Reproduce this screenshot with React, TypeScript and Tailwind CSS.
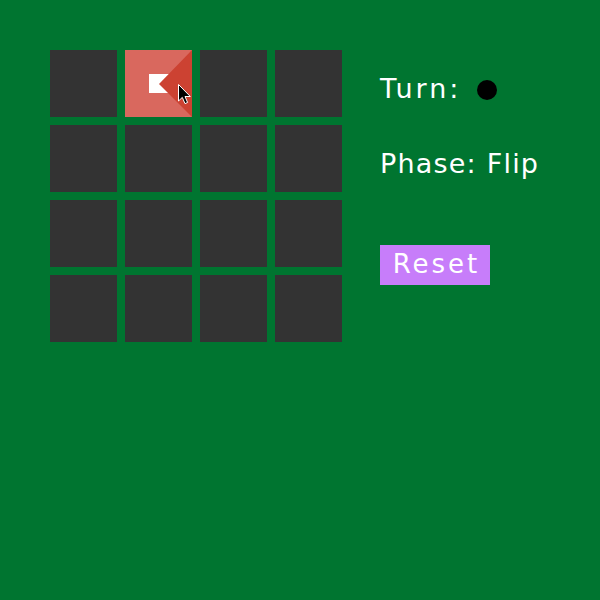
import React from 'react';

const font = { fontFamily: '"DejaVu Sans", "Liberation Sans", sans-serif' };

const FlippedTile = () => (
  <div className="relative w-[67px] h-[67px]">
    <svg width="67" height="67" viewBox="0 0 67 67" className="block">
      <rect width="67" height="67" fill="#d9685e" />
      <rect x="24" y="24" width="22" height="19" fill="#ffffff" />
      <polygon points="67,0 34,34 67,67" fill="#cc4232" />
    </svg>
    {/* mouse pointer */}
    <svg
      width="14"
      height="22"
      viewBox="0 0 14 22"
      className="absolute left-[53px] top-[34px]"
    >
      <path
        d="M0.5 0.5 L0.5 17 L4.3 13.4 L7 19.6 L9.6 18.5 L7 12.5 L12.3 12.5 Z"
        fill="#000000"
        stroke="#ffffff"
        strokeWidth="1"
      />
    </svg>
  </div>
);

export default function App() {
  const tiles = Array.from({ length: 16 }, (_, i) => i);

  return (
    <div className="w-[600px] h-[600px] bg-[#007530] flex items-start p-[50px] gap-[38px]" style={font}>
      <div className="grid grid-cols-[repeat(4,67px)] gap-[8px]">
        {tiles.map((i) =>
          i === 1 ? (
            <FlippedTile key={i} />
          ) : (
            <div key={i} className="w-[67px] h-[67px] bg-[#333333]" />
          )
        )}
      </div>

      <div className="flex flex-col items-start pt-[25px] text-white">
        <div className="flex items-center gap-[16px] h-[27px] text-[27px] leading-[27px]">
          <span className="tracking-[3px]">Turn:</span>
          <span className="w-[20px] h-[20px] rounded-full bg-black mt-[3px]" />
        </div>

        <div className="mt-[48px] h-[27px] text-[27px] leading-[27px] tracking-[1.2px]">
          Phase: Flip
        </div>

        <button className="mt-[68px] w-[110px] h-[40px] bg-[#c77dfa] text-white text-[26px] leading-[26px] tracking-[3px] flex items-center justify-center pb-[2px] pl-[3px]">
          Reset
        </button>
      </div>
    </div>
  );
}
